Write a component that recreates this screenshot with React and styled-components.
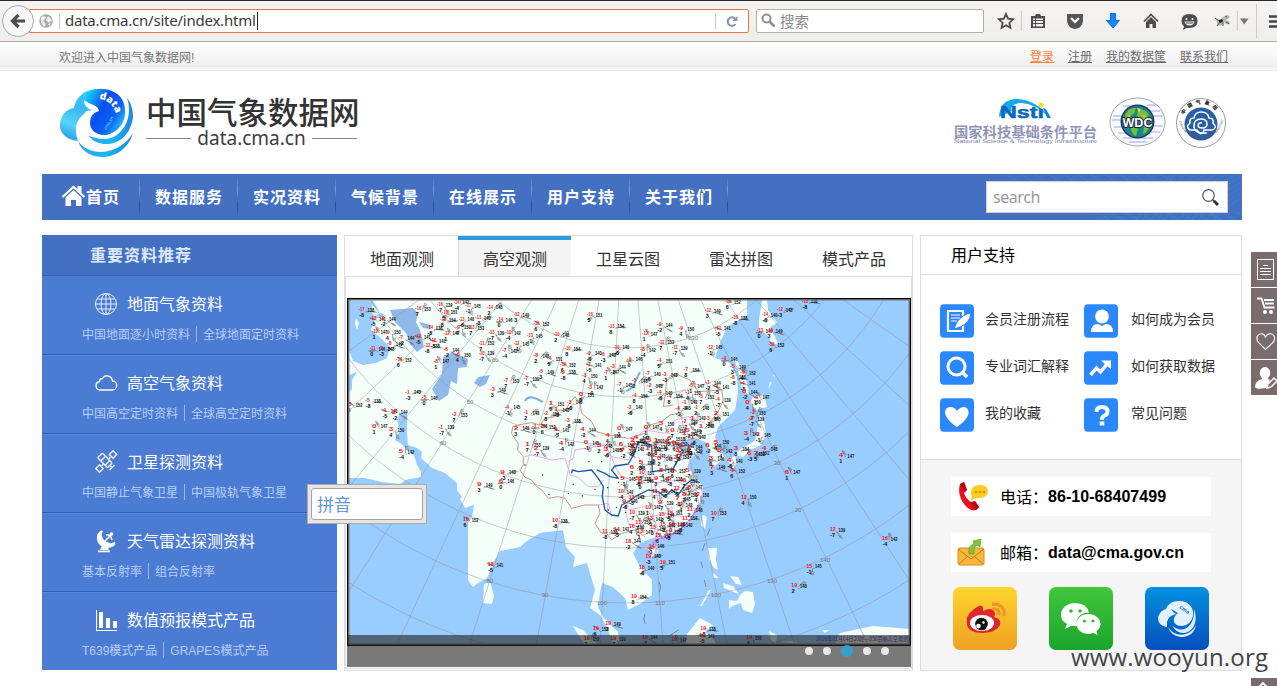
import React from 'react';
import styled, { createGlobalStyle, css } from 'styled-components';

const Global = createGlobalStyle`
  * { box-sizing: border-box; }
  html, body { margin: 0; height: 686px; overflow: hidden; background: #fff; }
  body { font-family: "Liberation Sans", "Noto Sans CJK SC", sans-serif; color: #333; }
  svg { display: block; flex: none; }
`;

const Page = styled.div`
  position: relative;
  width: 1277px;
  height: 686px;
  overflow: hidden;
`;

/* ---------- browser bar ---------- */
const Browser = styled.header`
  display: flex;
  align-items: center;
  height: 42px;
  border-top: 1px solid #2c2826;
  border-bottom: 1px solid #aaa6a1;
  background: linear-gradient(#f5f4f2, #efeeec);
  padding-left: 2px;
`;
const BackButton = styled.span`
  display: grid;
  place-items: center;
  width: 32px;
  height: 32px;
  border: 1px solid #a3adb8;
  border-radius: 50%;
  background: #f8f8f8;
  z-index: 1;
`;
const AddressField = styled.div`
  display: flex;
  align-items: center;
  width: 720px;
  height: 24px;
  margin-left: -5px;
  padding-left: 9px;
  border: 1px solid #ef7443;
  border-radius: 0 2px 2px 0;
  background: #fff;
`;
const Divider = styled.i`
  width: 1px;
  height: ${(p) => p.$h || 16}px;
  margin: 0 ${(p) => p.$r || 0}px 0 ${(p) => p.$l || 0}px;
  background: #cfccc8;
`;
const Address = styled.span`
  font: 15px/17px "Noto Sans", "Open Sans", sans-serif;
  letter-spacing: -0.23px;
  color: #3a3a3a;
  border-right: 1px solid #222;
  height: 18px;
  padding-right: 1px;
  margin-right: auto;
  white-space: nowrap;
`;
const FindField = styled.div`
  display: flex;
  align-items: center;
  gap: 4px;
  width: 228px;
  height: 24px;
  margin-left: 7px;
  padding: 0 0 2px 4px;
  border: 1px solid #b3afaa;
  border-radius: 2px;
  background: #fff;
  font: 14.5px "Noto Sans CJK SC", sans-serif;
  color: #8b8b8b;
`;
const Tool = styled.span`
  display: grid;
  place-items: center;
  width: ${(p) => p.$w || 38}px;
  height: 24px;
  color: #4c4c4c;
`;

/* ---------- site header ---------- */
const Welcome = styled.div`
  display: flex;
  align-items: center;
  justify-content: space-between;
  height: 29px;
  padding: 0 49px 0 59px;
  border-bottom: 1px solid #e6e6e6;
  background: linear-gradient(#fff, #eee 26px, #fff 27px);
  font: 12px "Liberation Sans", "Noto Sans CJK SC", sans-serif;
  color: #777;
`;
const UserLinks = styled.nav`
  display: flex;
  gap: 14px;
`;
const UserLink = styled.a`
  line-height: 16px;
  height: 14px;
  margin-top: -1px;
  border-bottom: 1px solid currentColor;
  color: ${(p) => (p.$hot ? '#ff7e33' : '#6b6b6b')};
`;
const Masthead = styled.div`
  display: flex;
  justify-content: space-between;
  height: 103px;
  padding: 15px 50px 0 56px;
`;
const Brand = styled.div`
  display: flex;
`;
const BrandText = styled.div`
  width: 214px;
  margin-left: 10px;
  padding-top: 4px;
`;
const BrandName = styled.div`
  font: 500 30.5px/42px "Noto Sans CJK SC", sans-serif;
  white-space: nowrap;
  color: #333;
`;
const BrandHost = styled.div`
  display: flex;
  align-items: center;
  gap: 6px;
  width: 211px;
  margin-top: -6px;
  font: 19px/24px "Noto Sans", sans-serif;
  color: #3d3d3d;
  &::before, &::after { content: ''; flex: 1; height: 1px; background: #888; margin-top: 1px; }
`;
const Partners = styled.div`
  display: flex;
  align-items: flex-start;
  padding-top: 10px;
`;

const NavBar = styled.nav`
  position: relative;
  display: flex;
  align-items: center;
  width: 1200px;
  height: 46px;
  margin-left: 42px;
  background: #4470c2;
`;
const NavItem = styled.a`
  display: flex;
  align-items: center;
  width: 98px;
  height: 46px;
  padding: 0 0 2px ${(p) => (p.$home ? 19 : 15)}px;
  border-right: 1px solid;
  border-image: linear-gradient(#4470c2 8%, #7b9fdf 35%, #204f9f 65%, #4470c2 96%) 1;
  font: bold 16px "Noto Sans CJK SC", sans-serif;
  letter-spacing: 1px;
  white-space: nowrap;
  color: #fff;
`;
const Waves = styled.svg`
  margin-left: auto;
  margin-right: -256px;
`;
const SearchBox = styled.div`
  position: relative;
  display: flex;
  align-items: center;
  justify-content: space-between;
  width: 242px;
  height: 32px;
  margin-right: 14px;
  padding: 0 7px 0 6px;
  border: 1px solid #d5d0c4;
  background: #fff;
  font: 16px "Noto Sans", sans-serif;
  letter-spacing: -0.45px;
  color: #999;
`;

/* ---------- columns ---------- */
const Columns = styled.main`
  display: flex;
  gap: 7px;
  width: 1200px;
  height: 436px;
  margin: 15px 0 0 42px;
`;
const Catalog = styled.aside`
  width: 295px;
  height: 435px;
  background: #4b7bd3;
`;
const CatalogHead = styled.h2`
  height: 41px;
  margin: 0;
  padding-left: 48px;
  border-bottom: 1px solid #3562b8;
  background: #4470c2;
  font: bold 16px/39px "Noto Sans CJK SC", sans-serif;
  letter-spacing: 1px;
  color: #dce8ff;
`;
const CatalogRow = styled.section`
  height: 79px;
  padding: 13px 0 0 40px;
  border-bottom: 1px solid #2f5fbd;
  & + & { border-top: 1px solid #5887de; }
  &:first-of-type { padding-top: 14px; }
  &:last-of-type { border-bottom: 0; }
`;
const CatalogTitle = styled.h3`
  display: flex;
  align-items: center;
  gap: 9px;
  height: 27px;
  margin: 0;
  padding-left: 12px;
  font: 16px "Noto Sans CJK SC", sans-serif;
  color: #fff;
  span { padding-bottom: 2px; }
`;
const SubLinks = styled.p`
  display: flex;
  margin: 9px 0 0;
  font: 12px/18px "Liberation Sans", "Noto Sans CJK SC", sans-serif;
  color: #b8d0f8;
  white-space: nowrap;
  span + span { margin-left: 6px; padding-left: 6px; border-left: 1px solid #9db9ec; line-height: 18px; height: 16px; }
`;

const Viewer = styled.section`
  width: 569px;
  height: 436px;
  border: 1px solid #ddd;
`;
const Tabs = styled.div`
  display: grid;
  grid-template-columns: repeat(5, 113px);
  height: 41px;
  border-bottom: 1px solid #ddd;
`;
const Tab = styled.button`
  border: 0;
  border-top: 4px solid transparent;
  background: none;
  padding: 0 0 0 1px;
  font: 16px/32px "Noto Sans CJK SC", sans-serif;
  color: #333;
  ${(p) => p.$active && css`
    border-top-color: #2b9bdf;
    background: #f4f4f4;
    box-shadow: inset 1px 0 #ddd;
  `}
`;
const Slide = styled.div`
  position: relative;
  height: 392px;
  padding: 21px 0 0 1px;
  border: solid #ddd;
  border-width: 0 1px 1px;
`;
const Caption = styled.div`
  position: absolute;
  left: 1px;
  bottom: 1px;
  width: 564px;
  height: 32px;
  display: flex;
  align-items: center;
  justify-content: flex-end;
  gap: 10px;
  padding-right: 22px;
  background: rgba(32, 32, 32, 0.6);
`;
const Dot = styled.i`
  width: ${(p) => (p.$on ? 12 : 8)}px;
  height: ${(p) => (p.$on ? 12 : 8)}px;
  border-radius: 50%;
  background: ${(p) => (p.$on ? '#369fd0' : '#e6e6e6')};
`;

const Support = styled.aside`
  width: 322px;
  height: 436px;
  border: 1px solid #ddd;
`;
const SupportHead = styled.h2`
  height: 39px;
  margin: 0;
  padding-left: 30px;
  border-bottom: 1px solid #ddd;
  font: 16px/36px "Noto Sans CJK SC", sans-serif;
  color: #000;
`;
const HelpGrid = styled.div`
  display: grid;
  grid-template-columns: 144px 150px;
  grid-auto-rows: 34px;
  row-gap: 13px;
  height: 184px;
  padding: 29px 0 0 19px;
`;
const HelpItem = styled.a`
  display: flex;
  align-items: center;
  gap: ${(p) => (p.$wide ? 13 : 11)}px;
  font: 14px "Noto Sans CJK SC", sans-serif;
  color: #333;
  span { margin-top: -6px; white-space: nowrap; }
`;
const ContactArea = styled.div`
  height: 211px;
  border-top: 1px solid #ddd;
  background: #f5f5f5;
  padding: 17px 30px 0;
`;
const Contact = styled.div`
  display: flex;
  align-items: center;
  height: 39px;
  margin-bottom: 17px;
  padding-left: 5px;
  background: #fff;
  font: 16px "Noto Sans CJK SC", sans-serif;
  color: #000;
  span { margin: -2px 0 0 11px; width: 48px; white-space: nowrap; }
  b { font: bold 16px "Liberation Sans", sans-serif; letter-spacing: 0.05px; }
`;
const Social = styled.div`
  display: flex;
  gap: 32px;
  padding-left: 2px;
  margin-top: -2px;
`;

/* ---------- floating pieces ---------- */
const SideDock = styled.div`
  position: absolute;
  left: 1251px;
  top: 252px;
  display: grid;
  gap: 1px;
`;
const DockButton = styled.span`
  display: grid;
  place-items: center start;
  width: 26px;
  height: 35px;
  background: #7a6c6c;
`;
const TopButton = styled(DockButton)`
  position: absolute;
  left: 1251px;
  top: 678px;
  place-items: start;
`;
const InputPopup = styled.div`
  position: absolute;
  left: 307px;
  top: 484px;
  width: 120px;
  height: 40px;
  padding: 3px;
  border: 1px solid #aeaeae;
  background: #e6e5e4;
  div {
    height: 32px;
    padding-left: 5px;
    border: 1px solid #a5a5a5;
    border-radius: 3px;
    background: #fff;
    font: 17px/30px "Noto Sans CJK SC", sans-serif;
    color: #6497d3;
  }
`;
const Watermark = styled.div`
  position: absolute;
  left: 1071px;
  top: 640px;
  font: 24px/33px "Open Sans", sans-serif;
  letter-spacing: 0.18px;
  color: #444;
  white-space: nowrap;
`;

/* ---------- weather chart ---------- */
const SHEETS = [
  { ox: 340, oy: 230, pts: '65,238 100,265 130,265 105,303 145,305 235,235 300,222 350,215 385,226 450,230 315,245 310,268 365,266 415,262 480,268 530,252 590,280 270,292 235,318 185,322 320,308 355,290 395,292 455,306 505,306 570,315 650,313 750,252 815,287 830,350 125,355 98,355 150,340 178,388 262,345 280,330 320,358 290,392 355,373 425,338 425,368 495,360 530,340 590,376 630,385 683,355 748,368 790,373 870,386 605,423 670,403 670,425 748,403 820,408 800,425 735,435 500,450 560,445 752,470 840,463 885,450 725,492 885,495 870,530 205,485 255,502 460,478 30,522 85,510 135,540 165,545 105,587 155,597 345,552 305,590 185,663 503,530 560,547 635,520 620,550 690,515 650,538 585,587 530,593 610,588 685,570 650,597 730,597 840,595 805,615 565,643 590,653 665,640 740,637 780,645 845,643 880,630 800,658' },
  { ox: 620, oy: 230, pts: '265,240 325,213 345,262 295,293 120,283 75,310 185,295 125,335 165,352 70,358 270,350 35,385 120,390 200,418 85,430 135,433 315,385 340,408 370,426 340,440 370,458 375,483 410,500 385,515 400,547 395,565 380,610 415,613 435,655 410,668 350,655 435,253 480,237 420,300 450,300 455,343 555,212 290,468 265,457 215,465 205,487 245,498 295,508 195,515 175,533 230,532 290,550 150,497 120,487 90,465 45,450 45,493 30,530 5,595 100,675 205,600 80,590 125,580 160,600 195,573 220,563 265,565 245,587 150,625 195,610 220,620 50,622 110,630 140,640 165,640 85,655 10,640 10,660 665,675 290,635 170,680 210,660 300,660' },
  { ox: 440, oy: 450, pts: '190,65 185,92 120,103 78,207 345,210 152,342 1205,15 1043,65 912,140 822,188 1178,237 1335,265 1108,347 1063,405 668,335 582,438 606,352 625,317 635,287 505,520 468,535 495,243 530,236 565,272 600,243 575,228 595,215 577,187 543,123 550,85 578,52 605,67 605,37 555,152 575,140 603,92 650,85 700,60 690,85 675,120 710,115 750,110 770,132 735,133 663,157 720,163 715,145 750,177 690,188 735,203 720,222 668,222 695,222 640,232 655,255 685,245 630,205 665,193 625,170 645,122 735,90 745,60 665,60 645,15 660,25 700,25 720,8 870,30 930,10 815,25 818,50 878,60 790,535 787,555 615,560 703,568 928,562 440,565 520,565' },
  { ox: 345, oy: 390, pts: '820,160 860,175 900,215 940,195 960,150 985,200 930,170 1010,165 1035,170 1000,180 915,150 870,160 785,180 830,185 865,232 890,250 950,240 985,240 940,262 975,262 1000,235 1010,270 900,270 880,265 835,262 1090,165 1100,205 1130,160 1150,212' },
];
const STATIONS = SHEETS.flatMap((s, k) =>
  s.pts.split(' ').map((p, i) => {
    const [px, py] = p.split(',').map(Number);
    const x = s.ox + px / 3;
    const y = s.oy + py / 3;
    const n = (i * 37 + k * 11) % 17;
    return { x, y, t: Math.max(-32, Math.min(19, Math.round((y - 298) / 8 - 18 + (n % 7)))), h: 138 + n, d: n - 8, a: (n * 67) % 360 };
  })
).filter((s, i, all) => !all.slice(0, i).some((o) => Math.abs(o.x - s.x) < 6 && Math.abs(o.y - s.y) < 2));
const MERIDIANS = Array.from({ length: 21 }, (_, i) => ((4.15 + 7.25 * (i - 11)) * Math.PI) / 180);

function Barb({ s }) {
  const r = (s.a * Math.PI) / 180;
  const ex = s.x + 4 + 8 * Math.cos(r);
  const ey = s.y + 2 + 7 * Math.sin(r);
  return (
    <path
      d={`M${s.x + 4},${s.y + 2}L${ex},${ey}l3,1M${ex - 1.5 * Math.cos(r)},${ey - 1.5 * Math.sin(r)}l3,1M${ex - 3 * Math.cos(r)},${ey - 3 * Math.sin(r)}l3,1`}
    />
  );
}

function WeatherChart() {
  return (
    <svg width="564" height="348" viewBox="347 298 564 348">
      <rect x="347" y="298" width="564" height="348" fill="#99ccff" />
      <g fill="#f4fffa">
        <path d="M349,300V478L365,478 382,482 400,484 405,480 421,477 421,472 417,465 414,455 400,443 395,440 400,430 397,420 400,413 407,413 407,433 408,445 417,448 422,452 421,458 432,468 445,473 457,483 457,490 462,497 460,499 465,508 474,505 472,517 468,523 468,580 473,587 478,583 487,578 493,563 500,551 520,547 527,541 540,533 563,530 566,547 575,557 573,567 587,563 592,580 595,590 590,608 600,615 607,627 613,644 620,644 618,632 603,617 598,607 600,593 602,583 613,587 625,598 628,610 640,604 652,595 652,580 640,567 633,553 640,543 653,538 673,533 687,525 700,503 703,487 697,477 687,467 690,460 700,450 694,447 683,452 678,443 692,438 700,440 708,443 710,457 713,467 725,458 718,447 715,437 718,427 735,410 738,393 737,377 730,363 715,358 720,343 727,327 747,315 747,300Z" />
        <path d="M762,300H767L768,310 777,323 770,327 778,343 773,345 768,336 759,330 759,320Z M733,353L745,374 749,395 742,390 739,375Z M753,396L764,395 767,407 755,410 750,403Z M760,413L764,420 766,435 761,445 750,450 743,457 734,455 742,448 755,441Z M728,460L735,456 737,463 732,470Z M768,390l2,-8 2,0zM773,375l1,2 1,-1z" />
        <path d="M484,584L490,582 494,596 492,604 483,603Z M648,550L657,546 658,553 651,557Z M703,515L707,517 705,529 701,525Z M708,548L717,548 716,560 718,570 714,568 709,559Z M713,573l6,5 -6,0z M723,583l10,3 6,8 -8,-3 -7,-3z M730,576l8,1 4,8 -6,-1z M729,600L737,601 741,594 745,591 753,592 755,604 752,613 743,610 741,603 732,606 729,609Z M700,606l9,-16 2,0 -9,16z M573,626L583,630 597,644 584,644Z M685,644L687,634 700,618 713,625 705,632 713,638 716,644Z M769,631l8,4 -1,9 -5,-4z M780,642l12,-1 9,3z M835,644L840,633 873,626 910,629V644Z M822,630l7,0 -4,3z" />
      </g>
      <path fill="#99ccff" d="M349,301L373,301 380,312 386,316 375,319 371,330 383,340 390,347 387,358 376,363 363,365 353,361 349,350Z M349,375l8,-3 -5,8 0,9 -3,3z" />
      <path fill="#f4fffa" d="M356,318l3,5 -2,7 -2,-6z M372,305l9,8 -6,3 -3,-3z" />
      <path fill="#90b9e9" d="M390,310L413,308 418,313 416,322 420,330 424,347 417,352 410,344 406,333 395,322Z M419,322l12,3 0,4 -8,-1z M443,357l10,-5 15,7 -1,8 -9,1 -1,16 -6,-3 -3,14 -9,6 -7,-12 10,-15z M474,383l4,-6 12,-2 -4,9 -6,3z" />
      <path d="M525,401q3,-6 12,-2l6,3M626,391q8,-3 9,-9l5,-10" fill="none" stroke="#7fb0ec" strokeWidth="2" />
      <g fill="none" stroke="#8d9296" strokeOpacity=".6" strokeWidth=".8">
        {[150, 200, 249, 298, 349, 400, 455, 516].map((r) => <circle key={r} cx="627" cy="148" r={r} />)}
        {MERIDIANS.map((a) => (
          <line key={a} x1={627 + 100 * Math.sin(a)} y1={148 + 100 * Math.cos(a)} x2={627 + 620 * Math.sin(a)} y2={148 + 620 * Math.cos(a)} />
        ))}
      </g>
      <g transform="translate(345 390) scale(.3333)" fill="none" strokeWidth="3" strokeLinejoin="round">
        <path stroke="#c89486" d="M690,20L670,45 665,60 640,60 630,80 600,85 585,105 560,98 520,105 503,110 500,130 512,150 520,160 518,180 535,200 535,225 525,240 540,262 560,270 575,290 590,300 610,325 640,320 660,325 680,355 720,345 760,345 765,370 750,400 770,430 785,430 800,450 830,430 870,420 900,440M690,20L705,40 710,70 740,95 755,125 790,135 850,145 900,130 915,105 950,95 975,75 1000,70 1000,50M960,20L955,50 985,45" />
        <path stroke="#c89486" d="M960,20L965,-30 1000,-45 1035,-30 1060,5 1130,0 1135,30 1120,65 1080,115" />
        <path stroke="#e9a6ed" d="M540,200L560,195 620,210 660,205 670,235 675,255 700,262 730,290 760,290 775,270M690,180L685,205 670,215M690,180L780,165 800,200 850,210 860,190M800,200L810,230 830,260 860,270M760,345L790,340 800,380M840,350L850,400 880,410 900,390M850,360L900,350 920,380 960,370 1010,380M860,150L900,120 960,130 990,90 1030,80 1080,100M880,200L900,240 930,280 990,270 1030,290 1060,280 1075,310 1060,350 1030,400 980,440 920,450M920,370L940,420 930,450M980,350L990,420M1020,320L1050,360M945,190L1000,210 1050,200M1010,100L1040,150M930,280L940,340M900,460L905,500 930,490 940,460 970,445M960,150L930,180M1040,40L1020,0 1000,10" />
        <path stroke="#2457a7" strokeWidth="4" d="M680,250L682,240 700,245 740,240 760,265 775,290 772,320 780,360 800,375 820,378 830,345 850,335 870,320 910,300 940,305 960,320 980,300 1000,315 1020,285 1040,270 1065,278M755,240L780,250 795,260 820,265 800,240 810,228 850,222 868,190 880,155 920,165 922,245 960,240 985,235 1010,190" />
        <path stroke="#8b7c94" d="M1095,415l-8,22M1080,460l-8,22M1068,515l5,18M1078,570l5,20M942,575l5,18-4,14M900,672q-6,14 0,30M970,740l30,-20" />
        {[[540, 225], [593, 255], [640, 130], [685, 283], [750, 298], [732, 215], [788, 293], [815, 352], [670, 310], [712, 318], [612, 314], [820, 277], [770, 215], [842, 367], [790, 360]].map(([x, y]) => <circle key={x + y * 9} cx={x} cy={y} r="2" fill="#111" />)}
        <path stroke="#d263de" strokeDasharray="7 3" d="M1060,345L1045,375 1020,405 985,430 930,452 905,495" strokeWidth="5" />
      </g>
      <g fill="none" stroke="#666" strokeWidth=".6">{STATIONS.map((s, i) => <Barb key={i} s={s} />)}</g>
      <g fontFamily="Liberation Sans" fontWeight="bold" fontSize="5.4">
        {STATIONS.map((s, i) => (
          <g key={i}>
            <text x={s.x - 3} y={s.y + 2} fill="#ff1414" textLength={Math.abs(s.t) > 9 ? 6 : 4.5} lengthAdjust="spacingAndGlyphs">{s.t}</text>
            <text x={s.x + 3.5} y={s.y + 2.6} fill="#111" textLength="9" lengthAdjust="spacingAndGlyphs">_{s.h}</text>
            <text x={s.x - 2.5} y={s.y + 8} fill="#111">{s.d}</text>
          </g>
        ))}
      </g>
      <g fontFamily="Liberation Sans" fontSize="6" fill="#777" textAnchor="middle">
        {[[490, 583, '80'], [545, 597, '90'], [602, 605, '100'], [660, 605, '110'], [716, 597, '120'], [772, 583, '130'], [825, 562, '140'], [798, 512, '20'], [777, 465, '30'], [693, 340, '130'], [443, 445, '60'], [470, 404, '50'], [495, 362, '60']].map(([x, y, v]) => <text key={x + v} x={x} y={y}>{v}</text>)}
      </g>
      <text x="816" y="641" fontFamily="Noto Sans CJK SC" fontSize="5.8" fill="#3c3cc0" textLength="92" lengthAdjust="spacingAndGlyphs">2016年01月04日20时---850百帕高空观测</text>
      <rect x="348.25" y="299.25" width="561.5" height="345.5" fill="none" stroke="#777" strokeWidth="2.5" />
      <rect x="347.5" y="298.5" width="563" height="347" fill="none" stroke="#000" strokeWidth="1.2" />
    </svg>
  );
}

/* ---------- drawings ---------- */
function SwirlLogo() {
  return (
    <svg width="80" height="76" viewBox="0 0 80 76">
      <defs>
        <linearGradient id="cloud" x1="0.7" y1="0" x2="0.3" y2="1">
          <stop offset="0" stopColor="#1ed9fb" /><stop offset=".45" stopColor="#3cb7f8" /><stop offset=".75" stopColor="#55d4fb" /><stop offset="1" stopColor="#2f9fe8" />
        </linearGradient>
        <linearGradient id="orb" x1="0" y1="0" x2="1" y2=".7">
          <stop offset="0" stopColor="#14e6fb" /><stop offset=".45" stopColor="#0b50f0" /><stop offset=".75" stopColor="#0b60f2" /><stop offset="1" stopColor="#29bdf6" />
        </linearGradient>
        <linearGradient id="wave" x1="0" y1="0" x2="1" y2="0">
          <stop offset="0" stopColor="#2aa7ee" /><stop offset=".5" stopColor="#18b9f2" /><stop offset="1" stopColor="#1a86e0" />
        </linearGradient>
        <path id="arc" d="M42,13Q58,14 61,33" />
      </defs>
      <path d="M77,47C72,64 58,71 46,71C32,71 24,62 22,55C30,66 44,68 56,64C66,60 73,54 77,47Z" fill="url(#wave)" />
      <path d="M32,49C42,64 73,62 77,31C77,24 75,17 71,12C78,32 66,53 48,53C42,53 36,51 32,49Z" fill="url(#wave)" />
      <path d="M22,55C10,54 3,46 4,38C5,28 11,23 18,22C20,9 32,2 44,3L54,10L42,24C36,24 30,24 29,27C22,32 20,38 20,44C20,49 22,55 22,55Z" fill="url(#cloud)" />
      <path d="M30,7Q45,-1 58,6C66,10 70,18 69,28C68,41 57,49 48,49C40,49 34,44 34,37C34,30 38,26 43,25L30,17Z" fill="url(#orb)" />
      <path d="M28,14C33,19 42,18 43,25C37,26 33,31 33,38C33,44 38,48 45,50C38,52 33,50 32,49C35,56 44,59 52,58C44,64 30,62 22,55C18,42 24,30 38,25C32,23 28,20 28,14Z" fill="#fff" />
      <text fontFamily="Open Sans" fontWeight="800" fontSize="10" fill="#fff"><textPath href="#arc" startOffset="1">data</textPath></text>
      <text fontFamily="Liberation Sans" fontSize="4.500" fill="#9fe3ff" transform="translate(50 44) rotate(-58)">cma.cn</text>
    </svg>
  );
}
function Nsti() {
  return (
    <svg width="148" height="52" viewBox="0 0 148 52" style={{ marginRight: 10 }}>
      <path d="M48,21Q49,3 66,3Q86,4 99,22Q84,7 70,7Q58,8 61,15Z" fill="#16a9ed" />
      <text x="49" y="22" fontFamily="Liberation Sans" fontWeight="bold" fontSize="17" fill="#0869bd" stroke="#0869bd" strokeWidth=".5" textLength="44" lengthAdjust="spacingAndGlyphs">Nstı</text>
      <path d="M92,12l4,10h4l-5,-9z" fill="#1687d4" /><circle cx="90" cy="9" r="2.500" fill="#f8dc1c" />
      <text x="3" y="40.500" fontFamily="Noto Sans CJK SC" fontWeight="bold" fontSize="13.500" fill="#8f95b8" textLength="143" lengthAdjust="spacingAndGlyphs">国家科技基础条件平台</text>
      <text x="3" y="46.500" fontFamily="Liberation Sans" fontSize="6.200" fill="#7d82aa" textLength="143" lengthAdjust="spacingAndGlyphs">National Science &amp; Technology Infrastructure</text>
    </svg>
  );
}
function Wdc() {
  return (
    <svg width="58" height="52" viewBox="0 0 58 52" style={{ marginRight: 8 }}>
      <ellipse cx="28.500" cy="26" rx="27.500" ry="24" fill="#f8f9fd" stroke="#a6a6a6" />
      <path d="M4,20h16M3,24h12M5,31h12M9,37h16M14,42h30M38,9h8M38,15h13M41,20h13M41,30h13M38,36h13M20,46h18M14,10h12" stroke="#b8c6ee" strokeWidth="1.500" />
      <circle cx="28.500" cy="25.500" r="17" fill="#2c3858" />
      <circle cx="28.500" cy="25.500" r="15.500" fill="#16878f" />
      <path d="M16,20Q19,11 27,12L25,18 20,20 21,27 16,28ZM29,13Q38,13 40,20L35,24 28,20ZM22,30l7,3 -2,7q-5,-2 -5,-10zM35,30l6,-2q-2,9 -7,10z" fill="#79bd3b" />
      <path d="M28,12l4,1 -2,4zM34,19l3,2 -2,3zM19,19l3,1 -2,2z" fill="#eed335" />
      <text x="28.500" y="31" textAnchor="middle" fontFamily="Liberation Sans" fontWeight="bold" fontSize="13.500" fill="#fff" stroke="#1b2439" strokeWidth="2" paintOrder="stroke" textLength="30" lengthAdjust="spacingAndGlyphs">WDC</text>
    </svg>
  );
}
function CmaSeal() {
  return (
    <svg width="52" height="52" viewBox="0 0 52 52">
      <defs><path id="top" d="M8.500,20A18.700,18.700 0 0 1 43.500,20" /><path id="low" d="M3.800,24A22.500,22.500 0 0 0 48.200,24" /></defs>
      <circle cx="26" cy="27" r="24.500" fill="#fff" stroke="#999" />
      <circle cx="26" cy="28" r="16.500" fill="#2b5fa5" />
      <path d="M15,34q-5,-3 0,-7q-1,-5 4,-5q1,-6 7,-6q7,0 8,6q5,0 4,5q5,5 -1,7h-8q-1,5 -5,3q-1,-2 -2,-3z" fill="#2b5fa5" stroke="#fff" strokeWidth="1.500" />
      <path d="M32,37q-13,1 -13,-7q0,-7 7,-7q6,0 6,5q0,4 -5,4q-4,0 -4,-3q1,-3 4,-2" fill="none" stroke="#fff" strokeWidth="1.500" />
      <text fontFamily="Noto Sans CJK SC" fontWeight="900" fontSize="5" letterSpacing="3.200" fill="#222"><textPath href="#top" startOffset="1">中国气象局</textPath></text>
      <text fontFamily="Liberation Sans" fontSize="3.200" fill="#555"><textPath href="#low" startOffset="1">CHINA METEOROLOGICAL ADMINISTRATION</textPath></text>
    </svg>
  );
}

const CatalogIcon = {
  globe: <g fill="none" stroke="#e6f0ff" strokeWidth="1"><circle cx="12" cy="12" r="10.500" /><ellipse cx="12" cy="12" rx="5" ry="10.500" /><path d="M12,1.500v21M1.500,12h21M3,7h18M3,17h18" /></g>,
  cloud: <path d="M6,19a4.300,4.300 0 0 1 -.5,-8.500q0,-3 3,-3q2,-3.500 5.500,-2.500q4,1 4.500,5a4.500,4.500 0 0 1 -.5,9z" fill="none" stroke="#fff" strokeWidth="1.300" />,
  satellite: <g fill="none" stroke="#eaf2ff" strokeWidth="1.400"><g transform="translate(12 11.500) rotate(45)"><rect x="-8.500" y="-3.300" width="14" height="6.600" rx="1" /><path d="M-4,-3v6M2,-3v6M0,-3.300v-3M0,3.300v3M5.500,0h3M8.500,-3.500v7" /></g><g transform="translate(19 4.500) rotate(45)"><rect x="-2.600" y="-2.600" width="5.200" height="5.200" /></g><g transform="translate(5.500 18.500) rotate(45)"><rect x="-2.600" y="-2.600" width="5.200" height="5.200" /></g></g>,
  radar: <g><path d="M7,1.500C1,5 2,13 7,17Q13,21 20,17Q22,15 21,13Q15,16 10,11Q6,6 9,2Z" fill="#fff" /><path d="M11,12l7,-7M12,6q5,-1 6,5" stroke="#fff" strokeWidth="1.500" fill="none" /><circle cx="17.500" cy="5" r="1.800" fill="#fff" /><path d="M8,17l-2,4h9l-2,-4zM4,21.500h12v1.800H4z" fill="#fff" /></g>,
  bars: <g fill="#fff"><path d="M2,2h1v20h20v1H2zM5,4h4v16H5zM12,10h4v10h-4zM19,13h4v7h-4z" /></g>,
};
const HelpIcon = {
  form: <g><path d="M8,7h15v20H8z" fill="none" stroke="#fff" strokeWidth="2.200" /><path d="M11,11h9M11,14h9M11,17h6" stroke="#fff" strokeWidth="1.200" /><path d="M14,25l3,-7q6,-8 14,-9q-1,10 -11,14z" fill="#fff" stroke="#2b87fd" /></g>,
  person: <g fill="#fff"><ellipse cx="18" cy="12.500" rx="6.800" ry="7" /><path d="M7,28q0,-8 7,-8l4,2 4,-2q7,0 7,8z" /></g>,
  find: <g fill="none" stroke="#fff"><circle cx="16.500" cy="15.500" r="8.500" strokeWidth="3" /><path d="M22,21l5,5" strokeWidth="3.500" /></g>,
  trend: <g><path d="M6.500,24l6,-7 4,4 7,-8.500" fill="none" stroke="#fff" strokeWidth="3.500" /><path d="M17,9.500h10v9z" fill="#fff" /></g>,
  heart: <path d="M17,29C2,19 3,10 10,9q5,0 7,4q3,-4 7,-4c7,1 7,11 -7,20z" fill="#fff" />,
  question: <g fill="none" stroke="#fff"><path d="M12.500,14q0,-5 5.500,-5t5.500,4.500q0,3 -3,4.200q-2.500,1 -2.500,4" strokeWidth="4" /><path d="M18,23.500v4" strokeWidth="4.600" /></g>,
};
const HelpBadge = ({ kind }) => (
  <svg width="34" height="34" viewBox="0 0 34 34"><rect width="34" height="33.500" y=".25" rx="4" fill="#2b87fd" />{HelpIcon[kind]}</svg>
);

const SocialTile = ({ id, from, to, children }) => (
  <svg width="64" height="63" viewBox="0 0 64 63">
    <defs><linearGradient id={id} x1="0" x2="0" y1="0" y2="1"><stop offset="0" stopColor={from} /><stop offset="1" stopColor={to} /></linearGradient></defs>
    <rect width="64" height="63" rx="7" fill={`url(#${id})`} />
    {children}
  </svg>
);

const CATALOG = [
  ['globe', '地面气象资料', '中国地面逐小时资料', '全球地面定时资料'],
  ['cloud', '高空气象资料', '中国高空定时资料', '全球高空定时资料'],
  ['satellite', '卫星探测资料', '中国静止气象卫星', '中国极轨气象卫星'],
  ['radar', '天气雷达探测资料', '基本反射率', '组合反射率'],
  ['bars', '数值预报模式产品', 'T639模式产品', 'GRAPES模式产品'],
];
const HELP = [
  ['form', '会员注册流程'], ['person', '如何成为会员'],
  ['find', '专业词汇解释'], ['trend', '如何获取数据'],
  ['heart', '我的收藏'], ['question', '常见问题'],
];

export default function App() {
  return (
    <Page>
      <Global />
      <Browser>
        <BackButton><svg width="16" height="16" viewBox="0 0 16 16"><path d="M8.500,2L2.500,8l6,6M3,8h12" fill="none" stroke="#4d4d4d" strokeWidth="3.200" /></svg></BackButton>
        <AddressField>
          <svg width="14" height="14" viewBox="0 0 14 14"><circle cx="7" cy="7" r="6.800" fill="#a9a9a9" /><path d="M2,3l4,-1 1,2 -3,3 3,3 -2,3 -3,-4zM9,2l4,4 -3,3 -3,-3zM9,10l3,-1 -2,3z" fill="#eee" /></svg>
          <Divider $l={6} $r={5} />
          <Address>data.cma.cn/site/index.html</Address>
          <Divider $r={10} />
          <svg width="12" height="13" viewBox="0 0 12 13" style={{ marginRight: 10 }}><path d="M9.500,9A4.300,4.300 0 1 1 9,3.500" fill="none" stroke="#8695a5" strokeWidth="2" /><path d="M11.500,1v5h-5z" fill="#8695a5" /></svg>
        </AddressField>
        <FindField>
          <svg width="15" height="15" viewBox="0 0 15 15"><circle cx="5.500" cy="5.500" r="4" fill="none" stroke="#8f8f8f" strokeWidth="2" /><path d="M8.500,8.500l5,5" stroke="#8f8f8f" strokeWidth="2.600" /></svg>
          搜索
        </FindField>
        <Tool $w={37} style={{ paddingLeft: 7 }}><svg width="18" height="18" viewBox="0 0 18 18"><path d="M9,2l2.100,4.700 5,.6 -3.700,3.400 1,5L9,13.200 4.600,15.700l1,-5L1.900,7.300l5,-.6z" fill="none" stroke="#4c4c4c" strokeWidth="1.800" /></svg></Tool>
        <Divider $h={20} />
        <Tool $w={31}><svg width="16" height="16" viewBox="0 0 16 16"><path d="M1,3h4l1,-2h4l1,2h4v12H1z" fill="#4c4c4c" /><path d="M3,5.500h10v8H3z" fill="#eee" /><path d="M3,7.500h10M3,10.500h10M5.500,5v9" stroke="#4c4c4c" /></svg></Tool>
        <Tool style={{ marginLeft: 3 }}><svg width="18" height="16" viewBox="0 0 18 16"><path d="M1,1h16v7q-1,7 -8,8q-7,-1 -8,-8z" fill="#555" /><path d="M5,5l4,4 4,-4" fill="none" stroke="#fff" strokeWidth="2.200" /></svg></Tool>
        <Tool><svg width="14" height="16" viewBox="0 0 14 16"><path d="M4.500,.5h5v7h4L7,15 .5,7.500h4z" fill="#1288f8" stroke="#0b6fd1" /></svg></Tool>
        <Tool><svg width="16" height="16" viewBox="0 0 16 16"><path d="M1,8.500L8,1.500l7,7" fill="none" stroke="#4c4c4c" strokeWidth="1.700" /><path d="M3,9l5,-5 5,5v6h-3.500v-4h-3v4H3z" fill="#4c4c4c" /></svg></Tool>
        <Tool><svg width="17" height="17" viewBox="0 0 17 17"><path d="M8.500,1q8,0 8,7t-8,7l-3,0 -3.500,2 1,-3.500q-2.500,-2 -2.500,-5.500q0,-7 8,-7z" fill="#4c4c4c" /><circle cx="5.500" cy="6" r="1.100" fill="#eee" /><circle cx="11.500" cy="6" r="1.100" fill="#eee" /><path d="M3.500,8.500h10q-1,4 -5,4t-5,-4z" fill="#eee" /><path d="M5,10h7" stroke="#4c4c4c" /></svg></Tool>
        <Tool $w={29}><svg width="17" height="16" viewBox="0 0 17 16"><path d="M2,6l4,1 3,-3 4,-2 3,1 -2,3 -3,1 4,1 1,3 -4,0 -2,-2 -2,3 -4,1z" fill="#b4b4b4" /><path d="M5,7l3,-1 1,2 -2,2 -2,-1z" fill="#222" /><path d="M1,5l4,3M3,13l3,-4M9,13l0,-4M11,3l2,1M12,9l3,2" fill="none" stroke="#555" /></svg></Tool>
        <Divider $h={20} />
        <Tool $w={13}><svg width="9" height="7" viewBox="0 0 9 7"><path d="M0,.5h8.500L4.200,6.500z" fill="#777" /></svg></Tool>
        <Divider $h={34} $l={5} />
        <Tool $w={20} style={{ placeItems: 'center end' }}><svg width="8" height="15" viewBox="0 0 8 15"><path d="M0,2.500h8M0,7.500h8M0,12.500h8" stroke="#444" strokeWidth="2.600" /></svg></Tool>
      </Browser>

      <Welcome>
        <span>欢迎进入中国气象数据网!</span>
        <UserLinks>
          <UserLink $hot>登录</UserLink><UserLink>注册</UserLink><UserLink>我的数据筐</UserLink><UserLink>联系我们</UserLink>
        </UserLinks>
      </Welcome>

      <Masthead>
        <Brand>
          <SwirlLogo />
          <BrandText>
            <BrandName>中国气象数据网</BrandName>
            <BrandHost>data.cma.cn</BrandHost>
          </BrandText>
        </Brand>
        <Partners><Nsti /><Wdc /><CmaSeal /></Partners>
      </Masthead>

      <NavBar>
        <NavItem $home>
          <svg width="25" height="22" viewBox="0 0 25 22"><path d="M1.500,12L12.500,2l11,10" fill="none" stroke="#fff" strokeWidth="2.200" /><path d="M16.500,1h4v7l-4,-4zM4.500,12.500l8,-7.500 8,7.500V21h-5.500v-6h-5v6H4.500z" fill="#fff" /></svg>
          首页
        </NavItem>
        {['数据服务', '实况资料', '气候背景', '在线展示', '用户支持', '关于我们'].map((n) => <NavItem key={n}>{n}</NavItem>)}
        <Waves width="256" height="46" viewBox="0 0 256 46">
          <g fill="none" stroke="#2f8fdc" strokeWidth=".8" strokeOpacity=".75">
            {Array.from({ length: 12 }, (_, i) => <path key={i} d={`M${150 + i * 7},46Q${180 + i * 5},${10 + i * 2} ${190 + i * 10},0M${20 + i * 14},0l14,8M${110 + i * 14},38l14,8`} />)}
          </g>
        </Waves>
        <SearchBox>
          search
          <svg width="19" height="19" viewBox="0 0 19 19"><circle cx="7.500" cy="7.500" r="5.800" fill="#fff" stroke="#555" strokeWidth="1.200" /><path d="M11.500,11.500l2,2" stroke="#444" strokeWidth="1.500" /><path d="M13,13l4,4" stroke="#333" strokeWidth="3" /></svg>
        </SearchBox>
      </NavBar>

      <Columns>
        <Catalog>
          <CatalogHead>重要资料推荐</CatalogHead>
          {CATALOG.map(([icon, title, a, b]) => (
            <CatalogRow key={icon}>
              <CatalogTitle><svg width="24" height="24" viewBox="0 0 24 24">{CatalogIcon[icon]}</svg><span>{title}</span></CatalogTitle>
              <SubLinks><span>{a}</span><span>{b}</span></SubLinks>
            </CatalogRow>
          ))}
        </Catalog>

        <Viewer>
          <Tabs>
            {['地面观测', '高空观测', '卫星云图', '雷达拼图', '模式产品'].map((t, i) => <Tab key={t} $active={i === 1}>{t}</Tab>)}
          </Tabs>
          <Slide>
            <WeatherChart />
            <Caption>{[0, 1, 2, 3, 4].map((i) => <Dot key={i} $on={i === 2} />)}</Caption>
          </Slide>
        </Viewer>

        <Support>
          <SupportHead>用户支持</SupportHead>
          <HelpGrid>
            {HELP.map(([icon, label], i) => <HelpItem key={icon} $wide={i % 2 === 1}><HelpBadge kind={icon} /><span>{label}</span></HelpItem>)}
          </HelpGrid>
          <ContactArea>
            <Contact>
              <svg width="33" height="32" viewBox="0 0 33 32"><path d="M4,3l4,-2 3,8 -3,3q2,6 7,9l4,-1 4,6 -3,3q-6,2 -12,-6Q1,13 4,3z" fill="#e8101c" /><path d="M4,3l4,-2 3,8 -3,1zM15,22l4,-2 4,6 -3,3z" fill="#b00912" /><path d="M24,4q8,0 8,6t-8,7l-4,0 -5,3 1,-5q-2,-2 -1,-5q1,-6 9,-6z" fill="#fbcc22" /><g fill="#d78b10"><circle cx="20" cy="11" r="1.200" /><circle cx="24" cy="11" r="1.200" /><circle cx="28" cy="11" r="1.200" /></g></svg>
              <span>电话：</span><b>86-10-68407499</b>
            </Contact>
            <Contact>
              <svg width="33" height="32" viewBox="0 0 33 32"><rect x="2" y="11" width="26" height="17" rx="2" fill="#f7b738" stroke="#d98f24" /><path d="M2,12l13,10L28,12M3,27l9,-8M27,27l-9,-8" fill="none" stroke="#c47c1c" /><path d="M13,17q-1,-9 5,-10l-1,-3 8,-2 -1,8 -3,-2q-4,3 -3,9z" fill="#7ec53a" stroke="#55992a" strokeWidth=".6" /></svg>
              <span>邮箱：</span><b>data@cma.gov.cn</b>
            </Contact>
            <Social>
              <SocialTile id="weibo" from="#ffd52f" to="#eea022">
                <path d="M14,37Q12,29 20,23Q27,17 29,19Q31,21 30,24Q38,20 41,24Q43,27 41,30Q49,32 47,38Q44,45 30,46Q15,46 14,37Z" fill="#e1232c" /><ellipse cx="29" cy="36" rx="12" ry="8" fill="#fff" /><circle cx="28.500" cy="37" r="6.300" fill="#111" /><circle cx="25.500" cy="39" r="2.300" fill="#fff" /><circle cx="30.500" cy="35.500" r="1.200" fill="#fff" /><path d="M39,17q14,0 12,12M39,22q8,-1 7,6" fill="none" stroke="#ee9425" strokeWidth="3" />
              </SocialTile>
              <SocialTile id="wechat" from="#43c63c" to="#19a52d">
                <path d="M26,16c-8,0 -14,5 -14,12q0,6 6,9l-2,5 6,-3 6,0c-2,-9 5,-14 12,-13q-2,-10 -14,-10z" fill="#fff" /><path d="M39.500,27c-7,0 -12,4 -12,10s6,10 12,10l5,-1 4,2 -1,-4q4,-3 4,-7c0,-6 -6,-10 -12,-10z" fill="#fff" /><g fill="#32b635"><circle cx="22" cy="24" r="1.800" /><circle cx="31" cy="24" r="1.800" /><circle cx="35.500" cy="34" r="1.600" /><circle cx="44" cy="34" r="1.600" /></g>
              </SocialTile>
              <SocialTile id="cma" from="#0491df" to="#044ebd">
                <path d="M22,40C16,39 13,36 13,31C14,26 17,23 21,22Q24,14 34,14C43,14 49,20 48,28C47,35 42,39 37,39C31,39 28,36 29,31Q30,28 33,26L26,22Q28,26 31,27Q23,29 22,35Z" fill="#e3f0ff" />
                <path d="M27,38C34,47 50,43 49,22C54,36 47,46 38,46Q31,46 27,38ZM23,40C30,51 45,50 51,38C49,48 42,50 36,50Q26,49 23,40Z" fill="#dceeff" />
                <text x="34" y="21" fontFamily="Liberation Sans" fontWeight="bold" fontSize="5.500" fill="#0869ca" transform="rotate(35 34 21)">cma</text>
              </SocialTile>
            </Social>
          </ContactArea>
        </Support>
      </Columns>

      <SideDock>
        <DockButton><svg width="26" height="35" viewBox="0 0 26 35"><rect x="6.500" y="7.500" width="16" height="20" fill="none" stroke="#fff" /><path d="M12,13.500h5M9,16.500h11M9,19.500h11M9,22.500h11" stroke="#fff" /></svg></DockButton>
        <DockButton><svg width="26" height="35" viewBox="0 0 26 35"><path d="M6,10.500h4.500l3,9h10" fill="none" stroke="#fff" strokeWidth="1.800" /><path d="M13,12h10M14,15.500h9" stroke="#fff" strokeWidth="2" /><circle cx="14" cy="24" r="2" fill="#fff" /><circle cx="20" cy="24" r="2" fill="#fff" /></svg></DockButton>
        <DockButton><svg width="26" height="35" viewBox="0 0 26 35"><path d="M14.500,25.500L7,18q-3,-6 2,-8q4,-1 5.500,3q2,-4 6,-3q5,2 2,8z" fill="none" stroke="#fff" strokeWidth="1.100" /></svg></DockButton>
        <DockButton><svg width="26" height="35" viewBox="0 0 26 35"><ellipse cx="14" cy="13" rx="5.300" ry="6" fill="#fff" /><path d="M4,27q0,-6 7,-8v-3h6v3l2,1 -4,8q-10,2 -11,-1z" fill="#fff" /><path d="M16,28l1,-4 6,-6 3,3 -6,6z" fill="#7a6c6c" stroke="#fff" strokeWidth="1.500" /></svg></DockButton>
      </SideDock>
      <TopButton><svg width="26" height="8" viewBox="0 0 26 8"><path d="M6,11l6,-6 6,6" fill="none" stroke="#fff" strokeWidth="1.800" /></svg></TopButton>
      <InputPopup><div>拼音</div></InputPopup>
      <Watermark>www.wooyun.org</Watermark>
    </Page>
  );
}
